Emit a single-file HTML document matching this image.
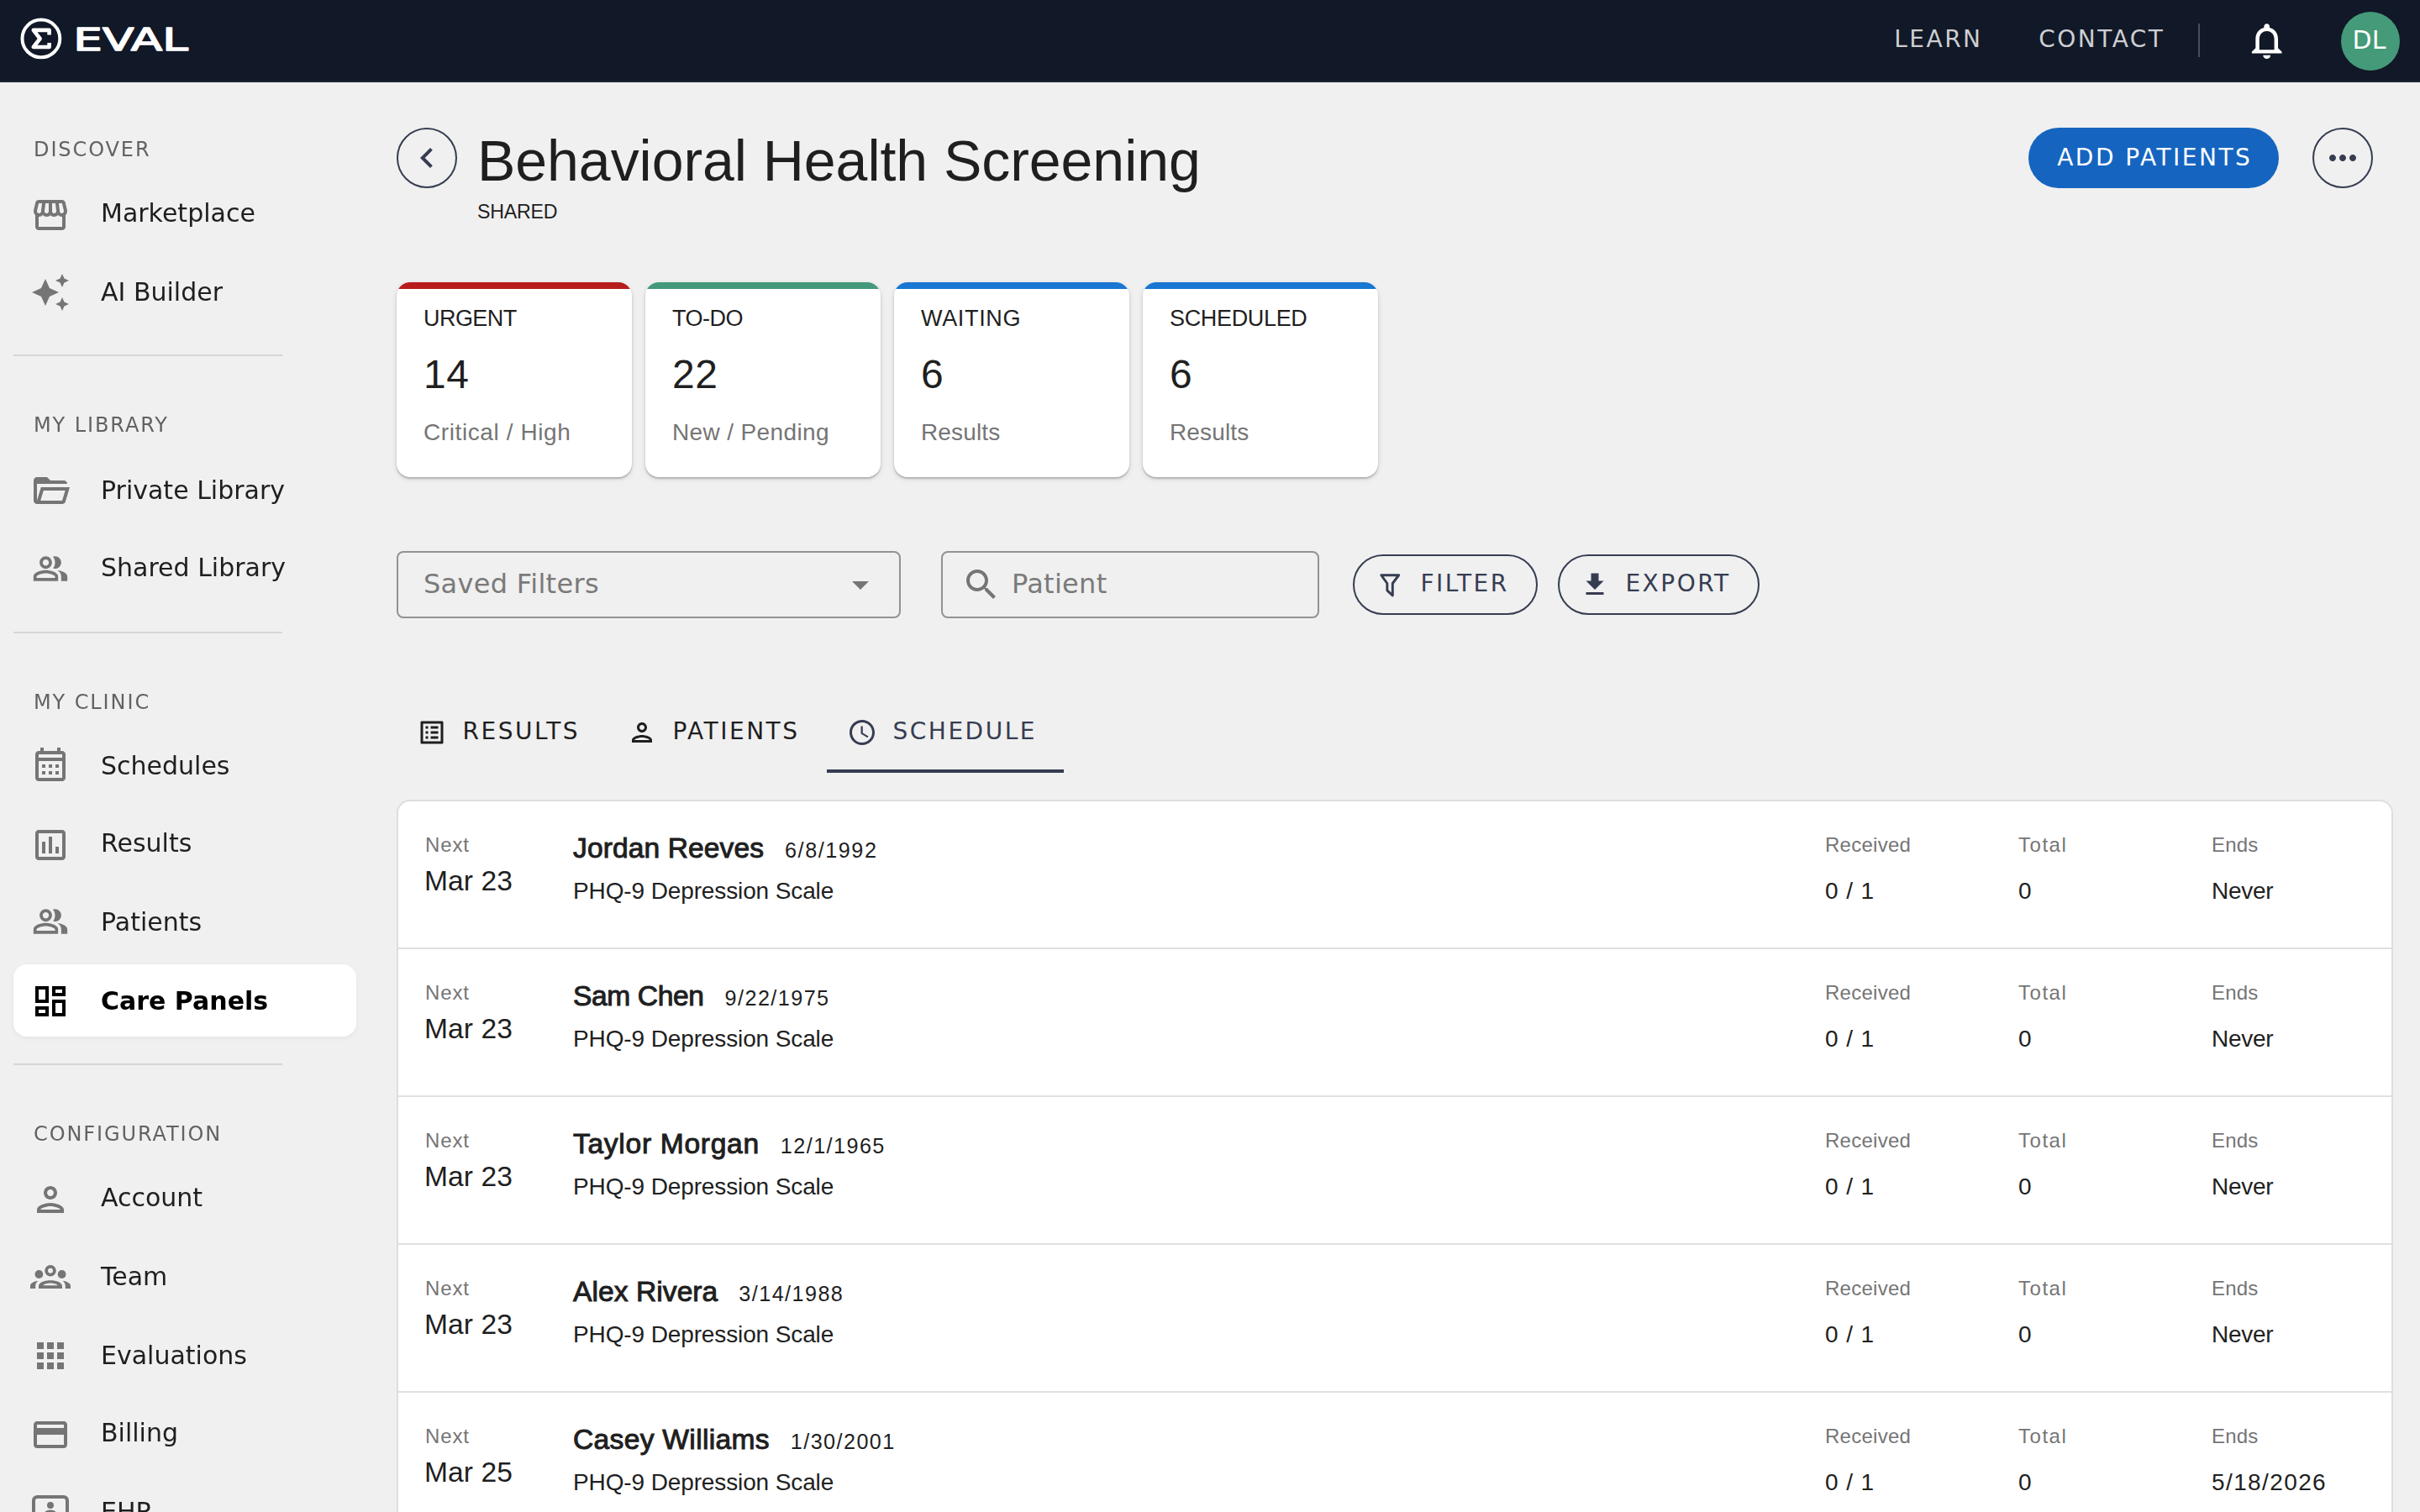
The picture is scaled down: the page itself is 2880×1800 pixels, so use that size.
<!DOCTYPE html>
<html lang="en">
<head>
<meta charset="utf-8">
<title>Behavioral Health Screening – Care Panels – EVAL</title>
<style>
*{box-sizing:border-box;margin:0;padding:0}
html,body{width:2880px;height:1800px;overflow:hidden;background:#f0f0f0}
@media (max-width:1500px){html{zoom:.5}}
body{position:relative;font-family:"DejaVu Sans",sans-serif;color:#1f1f1f}
.rb{font-family:"Liberation Sans",sans-serif}
svg{display:block}
a{color:inherit;text-decoration:none}
ul{list-style:none}
button{font:inherit;color:inherit;background:none;border:0}
/* top bar */
#top{position:absolute;left:0;top:0;width:2880px;height:98px;background:#111827;border-bottom:2px solid #1b2433}
#logo{position:absolute;left:20px;top:18px;width:220px;height:56px}
.tl{position:absolute;top:0;height:94px;line-height:94px;font-size:28px;letter-spacing:2.5px;color:#cdced1;white-space:nowrap}
#tdiv{position:absolute;left:2616px;top:28px;width:2px;height:40px;background:#474d5b}
#bell{position:absolute;left:2671.2px;top:23.1px;width:53.4px;height:51.3px;fill:#fff}
#ava{position:absolute;left:2786px;top:14px;width:70px;height:70px;border-radius:50%;background:#449a79;color:#fff;font-size:30px;line-height:67px;text-align:center;padding-right:3px}
/* side nav */
#nav{position:absolute;left:0;top:0;width:440px;height:1800px;will-change:transform}
.sec{position:absolute;left:40px;font-size:24px;line-height:28px;letter-spacing:1.9px;color:#626262;white-space:nowrap;font-weight:400}
.it{position:absolute;left:16px;width:408px;height:86px;border-radius:16px;color:#1f1f1f;font-size:30px;line-height:45px;white-space:nowrap;display:block}
.it svg{position:absolute;fill:#757575}
.it span{position:absolute;left:104px;top:21px}
.it.on{background:#fff;font-weight:700;color:#000;box-shadow:0 2px 6px rgba(0,0,0,.05)}
.it.on svg{fill:#000}
.hr{position:absolute;left:16px;width:320px;height:2px;background:#d6d6d6}
/* main */
#main{position:absolute;left:0;top:0;width:0;height:0}
.abs{position:absolute;white-space:nowrap}
#back,#morebtn{position:absolute;top:152px;width:72px;height:72px;border-radius:50%;border:2px solid #363d52}
#back svg,#morebtn svg{position:absolute;left:10px;top:10px;width:48px;height:48px;fill:#363d52}
#title{position:absolute;left:568px;top:149px;font-size:68px;line-height:84px;font-weight:400;letter-spacing:.5px;color:#1f1f1f;white-space:nowrap}
#shared{position:absolute;left:568px;top:236px;font-size:23.2px;line-height:32px;letter-spacing:.8px;color:#1f1f1f;white-space:nowrap}
#add{position:absolute;left:2414px;top:152px;width:298px;height:72px;border-radius:36px;background:#1565c0;color:#fff;font-size:28px;letter-spacing:2.5px;line-height:70px;text-align:center;white-space:nowrap;padding-left:2.5px}
.card{position:absolute;top:336px;width:280px;height:232px;background:#fff;border-radius:16px;overflow:hidden;box-shadow:0 2px 2px rgba(0,0,0,.2),0 2px 6px rgba(0,0,0,.12)}
.card:before{content:"";position:absolute;left:0;top:0;width:100%;height:8px;background:var(--c)}
.card .l{position:absolute;left:32px;top:23px;font-size:27px;line-height:40px;letter-spacing:.9px;color:#1f1f1f;white-space:nowrap}
.card .n{position:absolute;left:32px;top:78px;font-size:48px;line-height:64px;color:#1f1f1f;white-space:nowrap}
.card .s{position:absolute;left:32px;top:159px;font-size:28px;line-height:40px;letter-spacing:.3px;color:#757575;white-space:nowrap}
.fld{position:absolute;top:656px;height:80px;border:2px solid #929292;border-radius:8px;font-size:32px;line-height:74px;letter-spacing:.3px;color:#7a7a7a;white-space:nowrap}
.fld svg{position:absolute;width:48px;height:48px;fill:#757575}
.ob{position:absolute;top:660px;height:72px;border:2px solid #363d52;border-radius:36px;color:#363d52;font-size:28px;letter-spacing:2.5px;line-height:66px;white-space:nowrap}
.ob svg{position:absolute;left:24px;top:16px;width:36px;height:36px;fill:#363d52}
.ob span{position:absolute;left:78.4px;top:0}
.tab{position:absolute;top:824px;height:96px;font-size:28px;letter-spacing:2.5px;line-height:94px;color:#1f1f1f;white-space:nowrap}
.tab svg{position:absolute;left:24px;top:30px;width:36px;height:36px;fill:#1f1f1f}
.tab span{position:absolute;left:78.5px;top:0}
.tab.on{color:#363d52;border-bottom:4px solid #363d52}
.tab.on svg{fill:#363d52}
#list{position:absolute;left:472px;top:952px;width:2376px;height:900px;background:#fff;border:2px solid #dedede;border-radius:16px 16px 0 0}
.row{position:absolute;left:0;width:2372px;height:176px;border-bottom:2px solid #e0e0e0}
.row div{position:absolute;white-space:nowrap}
.cap{font-size:24px;line-height:32px;letter-spacing:.8px;color:#757575}
.v32{font-size:33.6px;line-height:48px;letter-spacing:0;color:#1f1f1f}
.nm{font-size:33.6px;line-height:48px;letter-spacing:0;color:#1f1f1f}
.nm b{font-weight:400;-webkit-text-stroke:1px #1f1f1f;letter-spacing:.35px}
.nm i{font-style:normal;font-size:25.2px;letter-spacing:.45px;margin-left:25px}
.v28{font-size:28px;line-height:40px;letter-spacing:.3px;color:#212121}
</style>
</head>
<body>
<header id="top">
<svg id="logo" viewBox="0 0 220 56" role="img" aria-label="EVAL"><circle cx="28.9" cy="27.9" r="22.4" fill="none" stroke="#fff" stroke-width="4"/><path d="M38.6 23.4V17.9H19.8L27.6 28L19.8 38H38.6V32.9" fill="none" stroke="#fff" stroke-width="4.6" stroke-linejoin="round"/><text x="67.3" y="42.1" font-family="DejaVu Sans, sans-serif" font-size="36.6" font-weight="400" fill="#fff" stroke="#fff" stroke-width="1.4" stroke-linejoin="round" textLength="136.5" lengthAdjust="spacingAndGlyphs">EVAL</text></svg>
<a class="tl" style="left:2254.2px">LEARN</a>
<a class="tl" style="left:2426.2px">CONTACT</a>
<span id="tdiv"></span>
<svg id="bell" preserveAspectRatio="none" viewBox="0 0 24 24" aria-hidden="true"><path d="M12 22c1.1 0 2-.9 2-2h-4c0 1.1.9 2 2 2zm6-6v-5c0-3.07-1.63-5.64-4.5-6.32V4c0-.83-.67-1.5-1.5-1.5s-1.5.67-1.5 1.5v.68C7.64 5.36 6 7.92 6 11v5l-2 2v1h16v-1l-2-2zm-2 1H8v-6c0-2.48 1.51-4.5 4-4.5s4 2.02 4 4.5v6z"/></svg>
<div id="ava">DL</div>
</header>
<nav id="nav">
<h6 class="sec" style="top:164px">DISCOVER</h6>
<a class="it" style="top:210px"><svg style="left:20px;top:22px;width:48px;height:48px" viewBox="0 0 24 24" aria-hidden="true"><path d="M21.9 8.89l-1.05-4.37c-.22-.9-1-1.52-1.91-1.52H5.05c-.9 0-1.69.63-1.9 1.52L2.1 8.89c-.24 1.02-.02 2.06.62 2.88.08.11.19.19.28.29V19c0 1.1.9 2 2 2h14c1.1 0 2-.9 2-2v-6.94c.09-.09.2-.18.28-.28.64-.82.87-1.87.62-2.89zm-2.99-3.9l1.05 4.37c.1.42.01.84-.25 1.17-.14.18-.44.47-.94.47-.61 0-1.14-.49-1.21-1.14L16.98 5l1.93-.01zM13 5h1.96l.54 4.52c.05.39-.07.78-.33 1.07-.22.26-.54.41-.95.41-.67 0-1.22-.59-1.22-1.31V5zM8.49 9.52L9.04 5H11v4.69c0 .72-.55 1.31-1.29 1.31-.34 0-.65-.15-.89-.41-.25-.29-.37-.68-.33-1.07zm-4.45-.16L5.05 5h1.97l-.58 4.86c-.08.65-.6 1.14-1.21 1.14-.49 0-.8-.29-.93-.47-.27-.32-.36-.75-.26-1.17zM5 19v-6.03c.08.01.15.03.23.03.87 0 1.66-.36 2.24-.95.6.6 1.4.95 2.31.95.87 0 1.65-.36 2.23-.93.59.57 1.39.93 2.29.93.84 0 1.64-.35 2.24-.95.58.59 1.37.95 2.24.95.08 0 .15-.02.23-.03V19H5z"/></svg><span>Marketplace</span></a>
<a class="it" style="top:304px"><svg style="left:20px;top:20px;width:48px;height:48px" viewBox="0 0 24 24" aria-hidden="true"><path d="M19 9l1.25-2.75L23 5l-2.75-1.25L19 1l-1.25 2.75L15 5l2.75 1.25L19 9zm-7.5.5L9 4 6.5 9.5 1 12l5.5 2.5L9 20l2.5-5.5L17 12l-5.5-2.5zM19 15l-1.25 2.75L15 19l2.75 1.25L19 23l1.25-2.75L23 19l-2.75-1.25L19 15z"/></svg><span>AI Builder</span></a>
<div class="hr" style="top:422px"></div>
<h6 class="sec" style="top:492px">MY LIBRARY</h6>
<a class="it" style="top:540px"><svg style="left:20px;top:20px;width:48px;height:48px" viewBox="0 0 24 24" aria-hidden="true"><path d="M4 20q-.825 0-1.412-.587Q2 18.825 2 18V6q0-.825.588-1.412Q3.175 4 4 4h6l2 2h8q.825 0 1.413.588Q22 7.175 22 8H4v10l2.4-8h17.1l-2.575 8.575q-.2.65-.737 1.038Q19.65 20 19 20Zm2.1-2H19l1.8-6H7.9Z"/></svg><span>Private Library</span></a>
<a class="it" style="top:632px"><svg style="left:22px;top:23px;width:44px;height:44px" viewBox="0 0 24 24" aria-hidden="true"><path d="M16.67 13.13C18.04 14.06 19 15.32 19 17v3h4v-3c0-2.18-3.57-3.47-6.33-3.87zM15 12c2.21 0 4-1.79 4-4s-1.79-4-4-4c-.47 0-.91.1-1.33.24C14.5 5.27 15 6.58 15 8s-.5 2.73-1.33 3.76c.42.14.86.24 1.33.24zM9 12c2.21 0 4-1.79 4-4s-1.79-4-4-4-4 1.79-4 4 1.79 4 4 4zm0-6c1.1 0 2 .9 2 2s-.9 2-2 2-2-.9-2-2 .9-2 2-2zM9 13c-2.67 0-8 1.34-8 4v3h16v-3c0-2.66-5.33-4-8-4zm6 5H3v-.99C3.2 16.29 6.3 15 9 15s5.8 1.29 6 2v1z"/></svg><span>Shared Library</span></a>
<div class="hr" style="top:752px"></div>
<h6 class="sec" style="top:822px">MY CLINIC</h6>
<a class="it" style="top:868px"><svg style="left:20px;top:18px;width:48px;height:48px" viewBox="0 0 24 24" aria-hidden="true"><path d="M19 4h-1V2h-2v2H8V2H6v2H5c-1.11 0-1.99.9-1.99 2L3 20c0 1.1.89 2 2 2h14c1.1 0 2-.9 2-2V6c0-1.1-.9-2-2-2zm0 16H5V10h14v10zm0-12H5V6h14v2zM9 14H7v-2h2v2zm4 0h-2v-2h2v2zm4 0h-2v-2h2v2zm-8 4H7v-2h2v2zm4 0h-2v-2h2v2zm4 0h-2v-2h2v2z"/></svg><span>Schedules</span></a>
<a class="it" style="top:960px"><svg style="left:20px;top:22px;width:48px;height:48px" viewBox="0 0 24 24" aria-hidden="true"><path d="M19 3H5c-1.1 0-2 .9-2 2v14c0 1.1.9 2 2 2h14c1.1 0 2-.9 2-2V5c0-1.1-.9-2-2-2zm0 16H5V5h14v14zM7 10h2v7H7zm4-3h2v10h-2zm4 6h2v4h-2z"/></svg><span>Results</span></a>
<a class="it" style="top:1054px"><svg style="left:22px;top:21px;width:44px;height:44px" viewBox="0 0 24 24" aria-hidden="true"><path d="M16.67 13.13C18.04 14.06 19 15.32 19 17v3h4v-3c0-2.18-3.57-3.47-6.33-3.87zM15 12c2.21 0 4-1.79 4-4s-1.79-4-4-4c-.47 0-.91.1-1.33.24C14.5 5.27 15 6.58 15 8s-.5 2.73-1.33 3.76c.42.14.86.24 1.33.24zM9 12c2.21 0 4-1.79 4-4s-1.79-4-4-4-4 1.79-4 4 1.79 4 4 4zm0-6c1.1 0 2 .9 2 2s-.9 2-2 2-2-.9-2-2 .9-2 2-2zM9 13c-2.67 0-8 1.34-8 4v3h16v-3c0-2.66-5.33-4-8-4zm6 5H3v-.99C3.2 16.29 6.3 15 9 15s5.8 1.29 6 2v1z"/></svg><span>Patients</span></a>
<a class="it on" style="top:1148px"><svg style="left:20px;top:20px;width:48px;height:48px" viewBox="0 0 24 24" aria-hidden="true"><path d="M19 5v2h-4V5h4M9 5v6H5V5h4m10 8v6h-4v-6h4M9 17v2H5v-2h4M21 3h-8v6h8V3zM11 3H3v10h8V3zm10 8h-8v10h8V11zm-10 4H3v6h8v-6z"/></svg><span>Care Panels</span></a>
<div class="hr" style="top:1266px"></div>
<h6 class="sec" style="top:1336px">CONFIGURATION</h6>
<a class="it" style="top:1382px"><svg style="left:20px;top:22px;width:48px;height:48px" viewBox="0 0 24 24" aria-hidden="true"><path d="M12 6c1.1 0 2 .9 2 2s-.9 2-2 2-2-.9-2-2 .9-2 2-2m0 10c2.7 0 5.8 1.29 6 2H6c.23-.72 3.31-2 6-2m0-12C9.79 4 8 5.79 8 8s1.79 4 4 4 4-1.79 4-4-1.79-4-4-4zm0 10c-2.67 0-8 1.34-8 4v2h16v-2c0-2.66-5.33-4-8-4z"/></svg><span>Account</span></a>
<a class="it" style="top:1476px"><svg style="left:20px;top:20px;width:48px;height:48px" viewBox="0 0 24 24" aria-hidden="true"><circle cx="5.2" cy="10.5" r="2.45"/><circle cx="18.8" cy="10.5" r="2.45"/><circle cx="12" cy="8.4" r="4.5" fill="#f0f0f0"/><path fill-rule="evenodd" d="M12 5a3.4 3.4 0 1 0 0 6.8A3.4 3.4 0 0 0 12 5zm0 1.9a1.5 1.5 0 1 1 0 3 1.5 1.5 0 0 1 0-3zM5 19v-1.5c0-2.2 3.4-3.4 7-3.4s7 1.2 7 3.400V19zm2.600-1.900h8.800c-.8-.8-2.500-1.300-4.400-1.300s-3.600.5-4.400 1.300zM4.700 14.400C2 14.800 0 15.800 0 17.500V19h3.100v-1.600c0-1.100.6-2.200 1.600-3zM19.300 14.400c2.700.4 4.700 1.400 4.700 3.100V19h-3.100v-1.600c0-1.100-.6-2.200-1.600-3z"/></svg><span>Team</span></a>
<a class="it" style="top:1570px"><svg style="left:20px;top:20px;width:48px;height:48px" viewBox="0 0 24 24" aria-hidden="true"><path d="M4 8h4V4H4v4zm6 12h4v-4h-4v4zm-6 0h4v-4H4v4zm0-6h4v-4H4v4zm6 0h4v-4h-4v4zm6-10v4h4V4h-4zm-6 4h4V4h-4v4zm6 6h4v-4h-4v4zm0 6h4v-4h-4v4z"/></svg><span>Evaluations</span></a>
<a class="it" style="top:1662px"><svg style="left:20px;top:22px;width:48px;height:48px" viewBox="0 0 24 24" aria-hidden="true"><path d="M20 4H4c-1.11 0-1.99.89-1.99 2L2 18c0 1.11.89 2 2 2h16c1.11 0 2-.89 2-2V6c0-1.11-.89-2-2-2zm0 14H4v-6h16v6zm0-10H4V6h16v2z"/></svg><span>Billing</span></a>
<a class="it" style="top:1756px"><svg style="left:20px;top:18px;width:48px;height:48px" viewBox="0 0 24 24" aria-hidden="true"><rect x="2" y="4" width="20" height="17" rx="2.2" fill="none" stroke="#757575" stroke-width="2"/><circle cx="12" cy="9" r="2"/><path d="M7.500 15.600c0-2.200 2-3.900 4.500-3.900s4.500 1.700 4.500 3.900V17h-9z"/></svg><span>EHR</span></a>
</nav>
<main id="main">
<button id="back" style="left:472px" aria-label="Back"><svg viewBox="0 0 24 24" aria-hidden="true"><path d="M15.41 7.41L14 6l-6 6 6 6 1.41-1.41L10.83 12z"/></svg></button>
<h1 id="title" class="rb" style="letter-spacing:-0.04px">Behavioral Health Screening</h1>
<div id="shared" class="rb" style="letter-spacing:-0.24px">SHARED</div>
<button id="add">ADD PATIENTS</button>
<button id="morebtn" style="left:2752px" aria-label="More"><svg viewBox="0 0 24 24" aria-hidden="true"><path d="M6 10c-1.1 0-2 .9-2 2s.9 2 2 2 2-.9 2-2-.9-2-2-2zm12 0c-1.1 0-2 .9-2 2s.9 2 2 2 2-.9 2-2-.9-2-2-2zm-6 0c-1.1 0-2 .9-2 2s.9 2 2 2 2-.9 2-2-.9-2-2-2z"/></svg></button>
<section id="cards">
<div class="card rb" style="left:472px;--c:#b71c1c"><div class="l" style="letter-spacing:-0.56px">URGENT</div><div class="n" style="letter-spacing:0.56px">14</div><div class="s" style="letter-spacing:0.59px">Critical / High</div></div>
<div class="card rb" style="left:768px;--c:#43997a"><div class="l" style="letter-spacing:-0.48px">TO-DO</div><div class="n" style="letter-spacing:0.56px">22</div><div class="s" style="letter-spacing:0.37px">New / Pending</div></div>
<div class="card rb" style="left:1064px;--c:#1976d2"><div class="l" style="letter-spacing:0.67px">WAITING</div><div class="n" style="letter-spacing:0.28px">6</div><div class="s" style="letter-spacing:0.14px">Results</div></div>
<div class="card rb" style="left:1360px;--c:#1976d2"><div class="l" style="letter-spacing:-0.34px">SCHEDULED</div><div class="n" style="letter-spacing:0.28px">6</div><div class="s" style="letter-spacing:0.14px">Results</div></div>
</section>
<section id="filters">
<div class="fld" style="left:472px;width:600px;padding-left:30px">Saved Filters<svg style="left:526px;top:14px" viewBox="0 0 24 24" aria-hidden="true"><path d="M7 10l5 5 5-5z"/></svg></div>
<div class="fld" style="left:1120px;width:450px;padding-left:82px"><svg style="left:22px;top:14px" viewBox="0 0 24 24" aria-hidden="true"><path d="M15.5 14h-.79l-.28-.27C15.41 12.59 16 11.11 16 9.5 16 5.91 13.09 3 9.5 3S3 5.91 3 9.5 5.91 16 9.5 16c1.61 0 3.09-.59 4.23-1.57l.27.28v.79l5 4.99L20.49 19l-4.99-5zm-6 0C7.01 14 5 11.99 5 9.5S7.01 5 9.5 5 14 7.01 14 9.5 11.99 14 9.5 14z"/></svg>Patient</div>
<button class="ob" style="left:1610px;width:220px"><svg viewBox="0 0 24 24" aria-hidden="true"><path d="M5.200 4.500H19.100L14.200 11V20.700L9.900 16.600V11Z" fill="none" stroke="#363d52" stroke-width="1.95" stroke-linejoin="round"/></svg><span>FILTER</span></button>
<button class="ob" style="left:1854px;width:240px"><svg viewBox="0 0 24 24" aria-hidden="true"><path d="M5 20h14v-2H5v2zM19 9h-4V3H9v6H5l7 7 7-7z"/></svg><span>EXPORT</span></button>
</section>
<div id="tabs">
<a class="tab" style="left:472px;width:250px"><svg viewBox="0 0 24 24" aria-hidden="true"><path d="M11 7h6v2h-6zm0 4h6v2h-6zm0 4h6v2h-6zM7 7h2v2H7zm0 4h2v2H7zm0 4h2v2H7zM20.1 3H3.9c-.5 0-.9.4-.9.9v16.2c0 .4.4.9.9.9h16.2c.4 0 .9-.5.9-.9V3.9c0-.5-.5-.9-.9-.9zM19 19H5V5h14v14z"/></svg><span>RESULTS</span></a>
<a class="tab" style="left:722px;width:262px"><svg viewBox="0 0 24 24" aria-hidden="true"><path d="M12 6c1.1 0 2 .9 2 2s-.9 2-2 2-2-.9-2-2 .9-2 2-2m0 10c2.7 0 5.8 1.29 6 2H6c.23-.72 3.31-2 6-2m0-12C9.79 4 8 5.79 8 8s1.79 4 4 4 4-1.79 4-4-1.79-4-4-4zm0 10c-2.67 0-8 1.34-8 4v2h16v-2c0-2.66-5.33-4-8-4z"/></svg><span>PATIENTS</span></a>
<a class="tab on" style="left:984px;width:282px"><svg viewBox="0 0 24 24" aria-hidden="true"><path d="M11.99 2C6.47 2 2 6.48 2 12s4.47 10 9.99 10C17.52 22 22 17.52 22 12S17.52 2 11.99 2zM12 20c-4.42 0-8-3.58-8-8s3.58-8 8-8 8 3.58 8 8-3.58 8-8 8zm.5-13H11v6l5.25 3.15.75-1.23-4.5-2.67z"/></svg><span>SCHEDULE</span></a>
</div>
<section id="list" class="rb">
<article class="row" style="top:0px"><div class="cap" style="left:32px;top:36px;letter-spacing:0.88px">Next</div><div class="v32" style="left:31px;top:71px;letter-spacing:0.10px">Mar 23</div><div class="nm" style="left:208px;top:32px"><b style="letter-spacing:0.09px">Jordan Reeves</b><i style="letter-spacing:1.55px">6/8/1992</i></div><div class="v28" style="left:208px;top:87px;letter-spacing:-0.12px">PHQ-9 Depression Scale</div><div class="cap" style="left:1698px;top:36px;letter-spacing:0.27px">Received</div><div class="v28" style="left:1698px;top:87px;letter-spacing:0.91px">0 / 1</div><div class="cap" style="left:1928px;top:36px;letter-spacing:1.52px">Total</div><div class="v28" style="left:1928px;top:87px;letter-spacing:0.47px">0</div><div class="cap" style="left:2158px;top:36px;letter-spacing:0.18px">Ends</div><div class="v28" style="left:2158px;top:87px;letter-spacing:-0.28px">Never</div></article>
<article class="row" style="top:176px"><div class="cap" style="left:32px;top:36px;letter-spacing:0.88px">Next</div><div class="v32" style="left:31px;top:71px;letter-spacing:0.10px">Mar 23</div><div class="nm" style="left:208px;top:32px"><b style="letter-spacing:-0.38px">Sam Chen</b><i style="letter-spacing:1.43px">9/22/1975</i></div><div class="v28" style="left:208px;top:87px;letter-spacing:-0.12px">PHQ-9 Depression Scale</div><div class="cap" style="left:1698px;top:36px;letter-spacing:0.27px">Received</div><div class="v28" style="left:1698px;top:87px;letter-spacing:0.91px">0 / 1</div><div class="cap" style="left:1928px;top:36px;letter-spacing:1.52px">Total</div><div class="v28" style="left:1928px;top:87px;letter-spacing:0.47px">0</div><div class="cap" style="left:2158px;top:36px;letter-spacing:0.18px">Ends</div><div class="v28" style="left:2158px;top:87px;letter-spacing:-0.28px">Never</div></article>
<article class="row" style="top:352px"><div class="cap" style="left:32px;top:36px;letter-spacing:0.88px">Next</div><div class="v32" style="left:31px;top:71px;letter-spacing:0.10px">Mar 23</div><div class="nm" style="left:208px;top:32px"><b style="letter-spacing:0.70px">Taylor Morgan</b><i style="letter-spacing:1.43px">12/1/1965</i></div><div class="v28" style="left:208px;top:87px;letter-spacing:-0.12px">PHQ-9 Depression Scale</div><div class="cap" style="left:1698px;top:36px;letter-spacing:0.27px">Received</div><div class="v28" style="left:1698px;top:87px;letter-spacing:0.91px">0 / 1</div><div class="cap" style="left:1928px;top:36px;letter-spacing:1.52px">Total</div><div class="v28" style="left:1928px;top:87px;letter-spacing:0.47px">0</div><div class="cap" style="left:2158px;top:36px;letter-spacing:0.18px">Ends</div><div class="v28" style="left:2158px;top:87px;letter-spacing:-0.28px">Never</div></article>
<article class="row" style="top:528px"><div class="cap" style="left:32px;top:36px;letter-spacing:0.88px">Next</div><div class="v32" style="left:31px;top:71px;letter-spacing:0.10px">Mar 23</div><div class="nm" style="left:208px;top:32px"><b style="letter-spacing:0.06px">Alex Rivera</b><i style="letter-spacing:1.43px">3/14/1988</i></div><div class="v28" style="left:208px;top:87px;letter-spacing:-0.12px">PHQ-9 Depression Scale</div><div class="cap" style="left:1698px;top:36px;letter-spacing:0.27px">Received</div><div class="v28" style="left:1698px;top:87px;letter-spacing:0.91px">0 / 1</div><div class="cap" style="left:1928px;top:36px;letter-spacing:1.52px">Total</div><div class="v28" style="left:1928px;top:87px;letter-spacing:0.47px">0</div><div class="cap" style="left:2158px;top:36px;letter-spacing:0.18px">Ends</div><div class="v28" style="left:2158px;top:87px;letter-spacing:-0.28px">Never</div></article>
<article class="row" style="top:704px"><div class="cap" style="left:32px;top:36px;letter-spacing:0.88px">Next</div><div class="v32" style="left:31px;top:71px;letter-spacing:0.10px">Mar 25</div><div class="nm" style="left:208px;top:32px"><b style="letter-spacing:0.31px">Casey Williams</b><i style="letter-spacing:1.43px">1/30/2001</i></div><div class="v28" style="left:208px;top:87px;letter-spacing:-0.12px">PHQ-9 Depression Scale</div><div class="cap" style="left:1698px;top:36px;letter-spacing:0.27px">Received</div><div class="v28" style="left:1698px;top:87px;letter-spacing:0.91px">0 / 1</div><div class="cap" style="left:1928px;top:36px;letter-spacing:1.52px">Total</div><div class="v28" style="left:1928px;top:87px;letter-spacing:0.47px">0</div><div class="cap" style="left:2158px;top:36px;letter-spacing:0.18px">Ends</div><div class="v28" style="left:2158px;top:87px;letter-spacing:1.39px">5/18/2026</div></article>
</section>
</main>
<script>(function(){var w=window.innerWidth;if(w&&(w<2600||w>3200)){document.documentElement.style.zoom=w/2880}})()</script>
</body>
</html>
